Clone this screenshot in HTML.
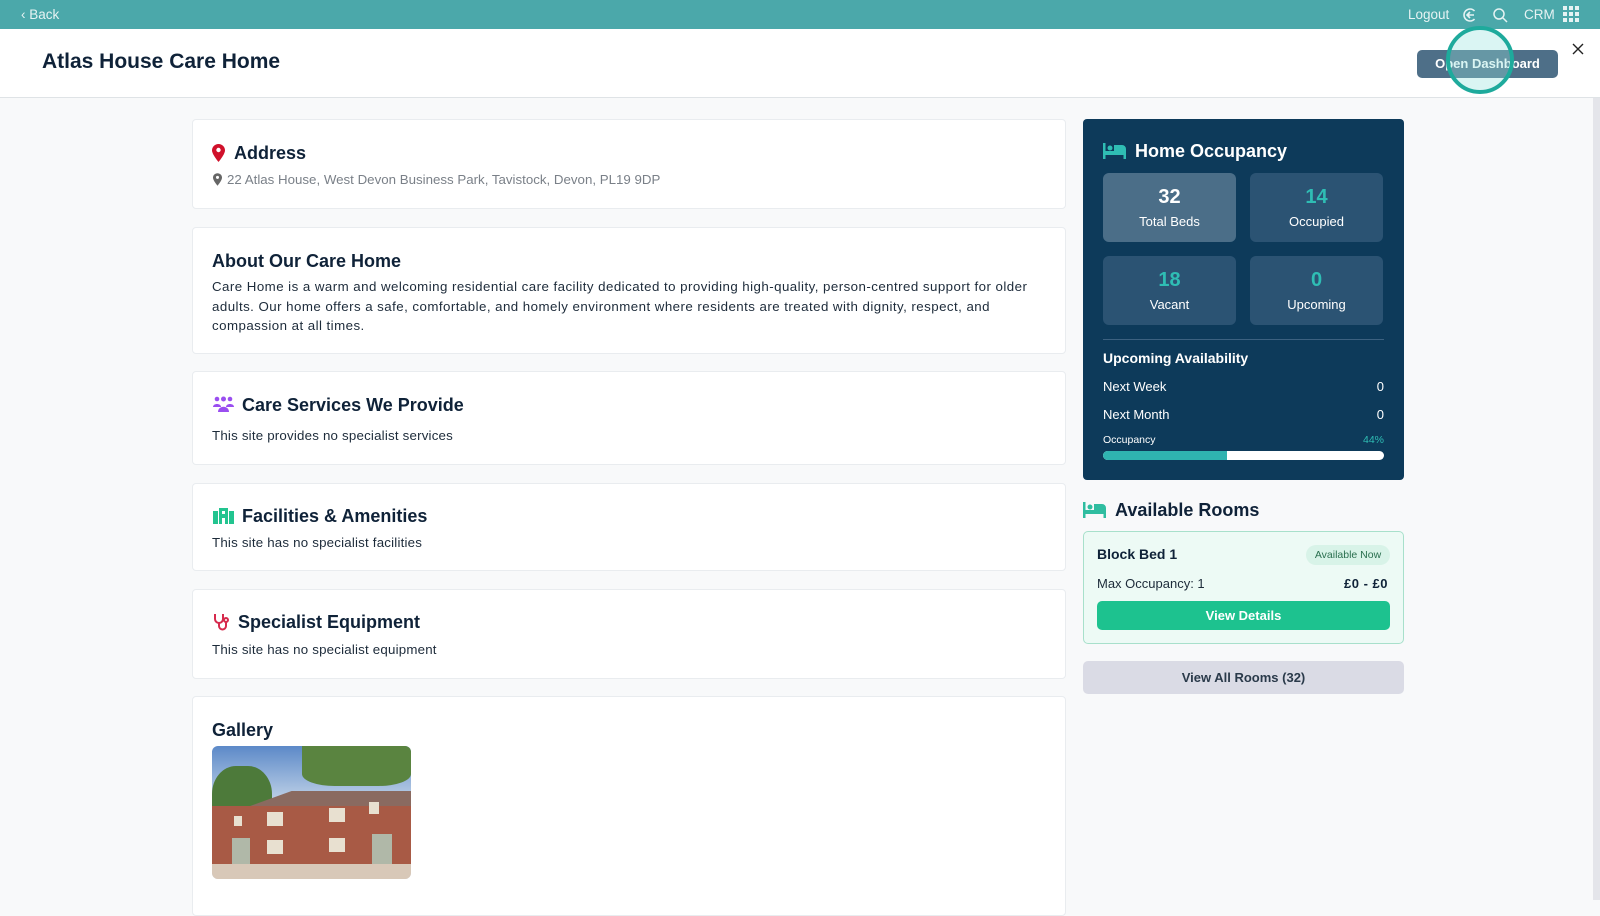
<!DOCTYPE html>
<html><head><meta charset="utf-8"><style>
*{box-sizing:border-box;margin:0;padding:0}
body{width:1600px;height:900px;overflow:hidden;background:#f8f9fa;font-family:"Liberation Sans",sans-serif;color:#0f2238;position:relative}
.abs{position:absolute}
.top{left:0;top:0;width:1600px;height:29px;background:#4ba8aa}
.top span{color:#e6f3f3;font-size:13.5px;position:absolute;top:7px}
.hdr{left:0;top:29px;width:1600px;height:69px;background:#fff;border-bottom:1px solid #dfe3e6}
.card{position:absolute;left:192px;width:874px;background:#fff;border:1px solid #e9ecef;border-radius:4px}
.h{position:absolute;font-weight:bold;font-size:18px;color:#0f2238}
.t{position:absolute;font-size:13.3px;color:#1d2b3a;line-height:19.5px;letter-spacing:.2px}
.stat{position:absolute;width:133px;height:69px;border-radius:6px;background:#2b5373;text-align:center;color:#fff}
.stat b{display:block;font-size:20px;margin-top:13px}
.stat i{display:block;font-style:normal;font-size:13px;margin-top:5px}
.row{position:absolute;left:1103px;width:281px;color:#fff;font-size:13px}
.row span{float:right}
</style></head><body>
<div class="abs top">
<span style="left:21px">‹ Back</span>
<span style="left:1408px">Logout</span>
<svg class="abs" style="left:1462px;top:7px" width="16" height="16" viewBox="0 0 16 16" fill="none" stroke="#e6f3f3" stroke-width="1.6"><path d="M12.5 4A6 6 0 1 0 12.5 12"/><path d="M12 8H5M8 5L5 8L8 11"/></svg>
<svg class="abs" style="left:1492px;top:7px" width="16" height="16" viewBox="0 0 16 16" fill="none" stroke="#e6f3f3" stroke-width="1.5"><circle cx="7" cy="7" r="5"/><path d="M11 11L15 15"/></svg>
<span style="left:1524px">CRM</span>
<svg class="abs" style="left:1563px;top:6px" width="17" height="17" viewBox="0 0 17 17" fill="#e6f3f3"><rect x="0" y="0" width="4" height="4"/><rect x="6" y="0" width="4" height="4"/><rect x="12" y="0" width="4" height="4"/><rect x="0" y="6" width="4" height="4"/><rect x="6" y="6" width="4" height="4"/><rect x="12" y="6" width="4" height="4"/><rect x="0" y="12" width="4" height="4"/><rect x="6" y="12" width="4" height="4"/><rect x="12" y="12" width="4" height="4"/></svg>
</div>
<div class="abs hdr">
<div class="abs" style="left:42px;top:21px;font-size:21px;font-weight:bold;color:#0f2238">Atlas House Care Home</div>
<div class="abs" style="left:1417px;top:21px;width:141px;height:28px;background:#4e6f88;border-radius:5px;color:#fff;font-size:13px;font-weight:bold;text-align:center;line-height:28px">Open Dashboard</div>
<div class="abs" style="left:1446px;top:-3px;width:68px;height:68px;border-radius:50%;border:4px solid #1eaa9c;background:rgba(150,225,220,0.35)"></div>
<svg class="abs" style="left:1572px;top:14px" width="12" height="12" viewBox="0 0 12 12" stroke="#222" stroke-width="1.4"><path d="M1 1L11 11M11 1L1 11"/></svg>
</div>
<div class="abs" style="left:1593px;top:98px;width:7px;height:802px;background:#e4e5ea"></div>

<div class="card" style="top:119px;height:90px">
<svg class="abs" style="left:19px;top:24px" width="13" height="18" viewBox="0 0 13 18"><path d="M6.5 0C3 0 0 2.8 0 6.3 0 10.5 6.5 18 6.5 18S13 10.5 13 6.3C13 2.8 10 0 6.5 0Z" fill="#d0112b"/><circle cx="6.5" cy="6" r="2.2" fill="#fff"/></svg>
<div class="h" style="left:41px;top:23px">Address</div>
<svg class="abs" style="left:20px;top:53px" width="9" height="13" viewBox="0 0 13 18"><path d="M6.5 0C3 0 0 2.8 0 6.3 0 10.5 6.5 18 6.5 18S13 10.5 13 6.3C13 2.8 10 0 6.5 0Z" fill="#666"/><circle cx="6.5" cy="6" r="2.2" fill="#fff"/></svg>
<div class="t" style="left:34px;top:50px;color:#7a8088;letter-spacing:0">22 Atlas House, West Devon Business Park, Tavistock, Devon, PL19 9DP</div>
</div>
<div class="card" style="top:227px;height:127px">
<div class="h" style="left:19px;top:23px">About Our Care Home</div>
<div class="t" style="left:19px;top:49px;width:830px;letter-spacing:.45px">Care Home is a warm and welcoming residential care facility dedicated to providing high-quality, person-centred support for older adults. Our home offers a safe, comfortable, and homely environment where residents are treated with dignity, respect, and compassion at all times.</div>
</div>
<div class="card" style="top:371px;height:94px">
<svg class="abs" style="left:20px;top:24px" width="21" height="16" viewBox="0 0 21 16" fill="#9a4ef0"><circle cx="4" cy="3" r="2.3"/><circle cx="10.5" cy="3" r="2.5"/><circle cx="17" cy="3" r="2.3"/><path d="M0 11C0 7 8 7 8 11Z"/><path d="M13 11C13 7 21 7 21 11Z"/><path d="M5 16C5 9 16 9 16 16Z"/></svg>
<div class="h" style="left:49px;top:23px">Care Services We Provide</div>
<div class="t" style="left:19px;top:54px">This site provides no specialist services</div>
</div>
<div class="card" style="top:483px;height:88px">
<svg class="abs" style="left:20px;top:24px" width="21" height="16" viewBox="0 0 21 16" fill="#22c48f"><rect x="0" y="3" width="5" height="13"/><rect x="6" y="0" width="9" height="16"/><rect x="16" y="3" width="5" height="13"/><rect x="9" y="3" width="3" height="3" fill="#fff"/><rect x="9" y="10" width="3" height="6" fill="#fff"/></svg>
<div class="h" style="left:49px;top:22px">Facilities &amp; Amenities</div>
<div class="t" style="left:19px;top:49px">This site has no specialist facilities</div>
</div>
<div class="card" style="top:589px;height:90px">
<svg class="abs" style="left:20px;top:23px" width="17" height="18" viewBox="0 0 17 18" fill="none" stroke="#d62a4d" stroke-width="2"><path d="M2 1V6A4 4 0 0 0 10 6V1"/><path d="M6 10V13A3 3 0 0 0 13 13V9"/><circle cx="13" cy="7" r="2"/></svg>
<div class="h" style="left:45px;top:22px">Specialist Equipment</div>
<div class="t" style="left:19px;top:50px">This site has no specialist equipment</div>
</div>
<div class="card" style="top:696px;height:220px">
<div class="h" style="left:19px;top:23px">Gallery</div>
<div class="abs" style="left:19px;top:49px;width:199px;height:133px;border-radius:6px;overflow:hidden;background:linear-gradient(#5c89c8,#c8d8ea 45%)">
<div class="abs" style="left:0;top:20px;width:60px;height:70px;background:#4d7a3a;border-radius:40% 40% 0 0"></div>
<div class="abs" style="left:90px;top:0;width:109px;height:40px;background:#5a8440;border-radius:0 0 30% 30%"></div>
<div class="abs" style="left:0;top:45px;width:199px;height:18px;background:#8a6a60;clip-path:polygon(15% 100%,40% 0,100% 0,100% 100%)"></div>
<div class="abs" style="left:0;top:60px;width:199px;height:60px;background:#a85a45"></div>
<div class="abs" style="left:0;top:118px;width:199px;height:15px;background:#d8c8b8"></div>
<div class="abs" style="left:22px;top:70px;width:8px;height:10px;background:#e8e0d0"></div>
<div class="abs" style="left:55px;top:66px;width:16px;height:14px;background:#e8e0d0"></div>
<div class="abs" style="left:117px;top:62px;width:16px;height:14px;background:#e8e0d0"></div>
<div class="abs" style="left:157px;top:56px;width:10px;height:12px;background:#e8e0d0"></div>
<div class="abs" style="left:55px;top:94px;width:16px;height:14px;background:#e8e0d0"></div>
<div class="abs" style="left:117px;top:92px;width:16px;height:14px;background:#e8e0d0"></div>
<div class="abs" style="left:160px;top:88px;width:20px;height:30px;background:#b0b8a8"></div>
<div class="abs" style="left:20px;top:92px;width:18px;height:26px;background:#b0b8a8"></div>
</div>
</div>

<div class="abs" style="left:1083px;top:119px;width:321px;height:361px;background:#0d3a5a;border-radius:4px"></div>
<svg class="abs" style="left:1103px;top:143px" width="23" height="16" viewBox="0 0 23 16" fill="#2fbdb4"><rect x="0" y="0" width="2.5" height="16"/><circle cx="7" cy="5" r="2.5"/><path d="M11 2H19A4 4 0 0 1 23 6V16H20.5V12H2.5V8H11Z"/></svg>
<div class="abs" style="left:1135px;top:141px;color:#fff;font-size:18px;font-weight:bold">Home Occupancy</div>
<div class="stat" style="left:1103px;top:173px;background:#4b6e88"><b>32</b><i>Total Beds</i></div>
<div class="stat" style="left:1250px;top:173px"><b style="color:#2fbdb4">14</b><i>Occupied</i></div>
<div class="stat" style="left:1103px;top:256px"><b style="color:#2fbdb4">18</b><i>Vacant</i></div>
<div class="stat" style="left:1250px;top:256px"><b style="color:#2fbdb4">0</b><i>Upcoming</i></div>
<div class="abs" style="left:1103px;top:339px;width:281px;height:1px;background:#3c6180"></div>
<div class="row" style="top:350px;font-weight:bold;font-size:14px">Upcoming Availability</div>
<div class="row" style="top:379px">Next Week<span>0</span></div>
<div class="row" style="top:407px">Next Month<span>0</span></div>
<div class="row" style="top:434px;font-size:10.5px">Occupancy<span style="color:#2fbdb4">44%</span></div>
<div class="abs" style="left:1103px;top:451px;width:281px;height:9px;background:#fff;border-radius:5px;overflow:hidden"><div style="width:44%;height:9px;background:#2fb3b0"></div></div>

<svg class="abs" style="left:1083px;top:502px" width="23" height="16" viewBox="0 0 23 16" fill="#2fbda0"><rect x="0" y="0" width="2.5" height="16"/><circle cx="7" cy="5" r="2.5"/><path d="M11 2H19A4 4 0 0 1 23 6V16H20.5V12H2.5V8H11Z"/></svg>
<div class="abs" style="left:1115px;top:500px;font-size:18px;font-weight:bold">Available Rooms</div>
<div class="abs" style="left:1083px;top:531px;width:321px;height:113px;background:#edfaf5;border:1px solid #a8e0cb;border-radius:5px"></div>
<div class="abs" style="left:1097px;top:546px;font-size:14px;font-weight:bold">Block Bed 1</div>
<div class="abs" style="left:1306px;top:545px;width:84px;height:20px;border-radius:10px;background:#d8f3e8;color:#2a6f4f;font-size:10.5px;text-align:center;line-height:20px">Available Now</div>
<div class="abs" style="left:1097px;top:576px;font-size:13px;color:#1d2b3a">Max Occupancy: 1</div>
<div class="abs" style="left:1344px;top:576px;font-size:13px;font-weight:bold;letter-spacing:.5px">£0 - £0</div>
<div class="abs" style="left:1097px;top:601px;width:293px;height:29px;background:#1dc28f;border-radius:5px;color:#fff;font-weight:bold;font-size:13px;text-align:center;line-height:29px">View Details</div>
<div class="abs" style="left:1083px;top:661px;width:321px;height:33px;background:#dadbe5;border-radius:5px;font-size:13px;font-weight:bold;color:#2a3a4a;text-align:center;line-height:33px">View All Rooms (32)</div>
</body></html>
